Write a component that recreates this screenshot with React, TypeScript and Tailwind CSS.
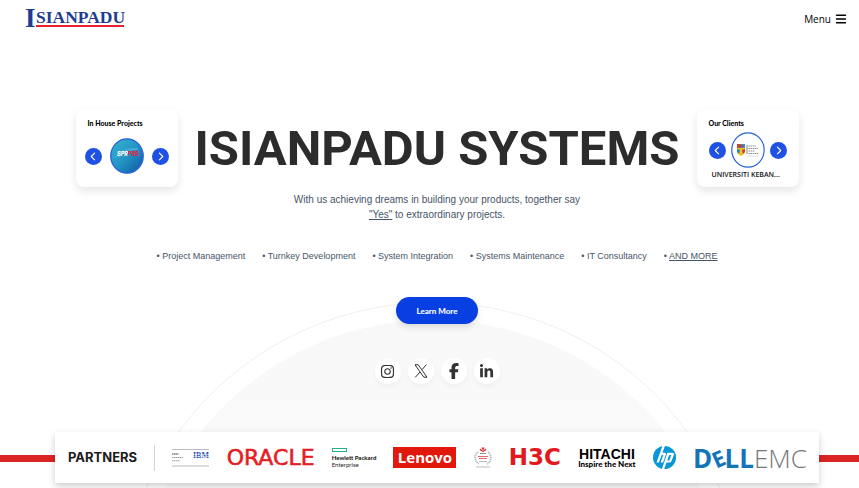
import React from "react";
import { FaFacebookF, FaInstagram, FaLinkedinIn, FaBars, FaChevronLeft, FaChevronRight } from "react-icons/fa6";

const services = [
  "Project Management",
  "Turnkey Development",
  "System Integration",
  "Systems Maintenance",
  "IT Consultancy",
];

function ArrowButton({ label, children }: { label: string; children: React.ReactNode }) {
  return (
    <button
      type="button"
      aria-label={label}
      className="flex h-[17px] w-[17px] items-center justify-center rounded-full bg-[#1f51e5] text-[9px] text-white"
    >
      {children}
    </button>
  );
}

function Card({ title, caption, children }: { title: string; caption?: string; children: React.ReactNode }) {
  return (
    <section className="flex h-[78px] w-[102px] shrink-0 flex-col rounded-lg bg-white px-[9px] pt-[8px] shadow-[0_4px_8px_rgba(0,0,0,0.1)]">
      <h2 className="px-[3px] font-['Lato',sans-serif] text-[7px] leading-[13px] font-black text-black">{title}</h2>
      <div className={caption ? "mt-[2px] flex items-center justify-between px-[3px]" : "mt-2 flex items-center justify-between"}>
        <ArrowButton label={"Previous " + title}>
          <FaChevronLeft />
        </ArrowButton>
        {children}
        <ArrowButton label={"Next " + title}>
          <FaChevronRight />
        </ArrowButton>
      </div>
      {caption && (
        <p className="px-[6px] font-['Open_Sans',sans-serif] text-[7px] leading-[14px] font-semibold whitespace-nowrap text-[#111]">
          {caption}
        </p>
      )}
    </section>
  );
}

function ProjectLogo() {
  return (
    <svg viewBox="0 0 34 36" className="h-9 w-[34px]" role="img">
      <defs>
        <linearGradient id="sea" x1="0" y1="0" x2="1" y2="1">
          <stop offset="0" stopColor="#35b5cf" />
          <stop offset="0.5" stopColor="#2494c6" />
          <stop offset="1" stopColor="#0d549f" />
        </linearGradient>
      </defs>
      <ellipse cx="17" cy="18" rx="16.2" ry="17.2" fill="url(#sea)" stroke="#2860dd" strokeWidth="1.3" />
      <path d="M5 20C10 12 19 10 28 11C19 12 12 14 8 20" fill="none" stroke="#6cc2df" strokeWidth="0.6" />
      <text x="7" y="18" fontFamily="Inter, sans-serif" fontSize="5.5" fontWeight="800" fontStyle="italic" fill="#fff">
        SPR<tspan fill="#e0263b">PRS</tspan>
      </text>
    </svg>
  );
}

function ClientLogo() {
  return (
    <svg viewBox="0 0 34 36" className="h-9 w-[34px]" role="img">
      <ellipse cx="17" cy="18" rx="16.2" ry="17.2" fill="#fff" stroke="#2860dd" strokeWidth="1.2" />
      <path d="M6 12H14V19Q14 22 10 24Q6 22 6 19Z" fill="#e8c31a" />
      <path d="M6 12H10V16H6Z" fill="#d94437" />
      <path d="M10 12H14V16H10Z" fill="#3f8ec6" />
      <path d="M6 17L9 18L8 22L6 20Z" fill="#2987c8" />
      <path d="M14 17L11 18L12 22L14 20Z" fill="#d93838" />
      <path d="M7 14H13" stroke="#8c3948" strokeWidth="0.8" />
      <path d="M16 13V22" stroke="#666" strokeWidth="0.8" />
      <path d="M17.5 14H25M17.5 16.5H27M17.5 19H24M17.5 21.5H28" stroke="#888" strokeWidth="0.9" strokeDasharray="1.6 0.5" />
      <path d="M16 24H28" stroke="#bbb" strokeWidth="0.5" />
    </svg>
  );
}

function XLogo() {
  return (
    <svg viewBox="0 0 14 14" className="h-[14px] w-[14px]" fill="none" stroke="#333" strokeWidth="1">
      <path d="M1 0.8H4.2L13 13.2H9.8Z" />
      <path d="M12.4 0.6L7.9 5.8M6 8L1.2 13.4" />
    </svg>
  );
}

function SocialLink({ label, children }: { label: string; children: React.ReactNode }) {
  return (
    <a
      href="#"
      aria-label={label}
      className="flex h-[26px] w-[26px] items-center justify-center rounded-full bg-white text-[15px] text-[#333] shadow-[0_3px_6px_rgba(0,0,0,0.04)]"
    >
      {children}
    </a>
  );
}

function Partners() {
  return (
    <section className="relative mt-auto mb-[5px]">
      <div className="absolute inset-x-0 top-[23px] h-[7px] bg-[#dc2424]" />
      <div className="relative mr-[40px] ml-[55px] flex h-[51px] items-center justify-between bg-white pr-[12px] pl-[13px] shadow-[0_3px_7px_rgba(0,0,0,0.2)]">
        <h2 className="font-['Inter',sans-serif] text-[13px] font-bold text-[#1b1b1b]">PARTNERS</h2>
        <div className="h-[26px] w-px bg-[#d2d2d2]" />
        <svg viewBox="0 0 37 18" className="h-[18px] w-[37px]" role="img">
          <path d="M0 0.5H37M0 17H37" stroke="#aaa" strokeWidth="0.8" />
          <path d="M0 5H6.5" stroke="#444" strokeWidth="1.2" strokeDasharray="1.5 0.4" />
          <path d="M0 8.5H11M0 11.8H8" stroke="#999" strokeWidth="1" strokeDasharray="1.4 0.5" />
          <text x="21" y="9" fontFamily="Liberation Serif, serif" fontSize="8" fontWeight="700" fill="#2d4fae">IBM</text>
          <path d="M20 5.5H37M20 7.5H37" stroke="#fff" strokeWidth="0.4" />
        </svg>
        <span className="font-['DejaVu_Sans',sans-serif] text-[22px] leading-none text-[#e51d24] [-webkit-text-stroke:0.6px_#e51d24]">ORACLE</span>
        <div className="font-['Lato',sans-serif] text-[6px] leading-[7px] text-[#222]">
          <div className="mb-[2px] h-[4px] w-[15px] border border-[#25b28b]" />
          <div className="font-black">Hewlett Packard</div>
          <div>Enterprise</div>
        </div>
        <div className="flex h-[21px] w-[63px] items-center justify-center bg-[#e2180c] font-['Open_Sans',sans-serif] text-[15px] leading-none font-bold text-white">Lenovo</div>
        <svg viewBox="0 0 18 21" className="h-[21px] w-[18px]" role="img">
          <path d="M4 5C0 8 0 14 5 17M14 5C18 8 18 14 13 17" fill="none" stroke="#bbb" strokeWidth="1.8" strokeDasharray="1.3 0.6" />
          <path d="M9 5L5.5 3L6.5 1.5L9 4L7.5 0.5H10.5L9 4L11.5 1.5L12.5 3Z" fill="#df2e33" />
          <path d="M6 6.5H12" stroke="#777" strokeWidth="0.8" />
          <path d="M4 9.5H14M5 11.5H13" stroke="#df6b6e" strokeWidth="1.1" />
          <path d="M5 14.5H13" stroke="#aaa" strokeWidth="0.8" />
          <path d="M2 20H16" stroke="#aaa" strokeWidth="0.8" />
        </svg>
        <span className="font-['DejaVu_Sans',sans-serif] text-[23px] leading-none font-bold text-[#e31920]">H3C</span>
        <div className="text-center text-black">
          <div className="font-['Liberation_Sans',sans-serif] text-[14px] leading-[12px] font-bold">HITACHI</div>
          <div className="font-['Lato',sans-serif] text-[8px] leading-[8px] font-black">Inspire the Next</div>
        </div>
        <svg viewBox="0 0 24 24" className="h-[23px] w-[23px]" role="img">
          <circle cx="12" cy="12" r="12" fill="#0896d7" />
          <path d="M9.8 0L3.7 17.3H6.2L9 9.4H10.8L8 17.3H10.5L13.4 9Q14.2 7 12 7H9.9L12.4 0ZM15 7L9.3 24H11.7L14.1 17.3H17.2Q18.8 17.3 19.4 15.7L21.8 9Q22.5 7 20.1 7ZM16.9 9.3H19.1L17.1 15H14.9Z" fill="#fff" />
        </svg>
        <div className="flex items-center font-['Open_Sans',sans-serif] text-[26px] leading-none">
          <span className="flex items-center font-bold text-[#1474b8]">
            D<span className="-rotate-[24deg] text-[22px]">E</span>LL
          </span>
          <span className="font-light text-[#777]">EMC</span>
        </div>
      </div>
    </section>
  );
}

export default function App() {
  return (
    <div className="relative flex min-h-screen flex-col overflow-hidden bg-white font-['Roboto',sans-serif]">
      <div className="absolute top-[302px] left-1/2 ml-[3px] h-[630px] w-[630px] -translate-x-1/2 rounded-full border border-[#f0f0f0] p-[17px]">
        <div className="h-full w-full rounded-full bg-linear-to-b from-[#f8f8f8] to-white" />
      </div>

      <header className="relative flex items-start justify-between pt-[8px] pr-3 pl-[25px]">
        <a href="#" aria-label="Isianpadu home">
          <svg viewBox="0 0 106 26" className="h-[26px] w-[106px] overflow-visible">
            <g fontFamily="Liberation Serif, serif" fontWeight="700" fill="#1e3c92">
              <text x="0" y="19" fontSize="27">I</text>
              <text x="11" y="15" fontSize="17.5">SIANPADU</text>
            </g>
            <path d="M11 18H99" stroke="#e8232d" strokeWidth="2" />
          </svg>
        </a>
        <button type="button" className="flex items-center gap-1 font-['Open_Sans',sans-serif] text-[10px] leading-[22px] text-black">
          Menu <FaBars className="text-[12px]" />
        </button>
      </header>

      <main className="relative flex flex-col items-center pl-[15px]">
        <div className="mt-[75px] flex w-full items-start justify-center gap-[17px]">
          <Card title="In House Projects">
            <ProjectLogo />
          </Card>
          <h1 className="w-[485px] pt-[8px] text-center text-[49px] leading-[63px] font-bold whitespace-nowrap text-[#2c2c2c]">
            ISIANPADU SYSTEMS
          </h1>
          <Card title="Our Clients" caption="UNIVERSITI KEBAN...">
            <ClientLogo />
          </Card>
        </div>
        <p className="mt-[5px] w-[310px] text-center font-['Liberation_Sans',sans-serif] text-[10px] leading-[15px] text-[#475569]">
          With us achieving dreams in building your products, together say <br />
          <a href="#" className="underline">"Yes"</a> to extraordinary projects.
        </p>
        <ul className="mt-[26px] flex gap-[17px] font-['Liberation_Sans',sans-serif] text-[9px] leading-[16px] whitespace-nowrap text-[#475569]">
          {services.map((name) => (
            <li key={name}>• {name}</li>
          ))}
          <li>
            • <a href="#" className="underline">AND MORE</a>
          </li>
        </ul>
        <button
          type="button"
          className="mt-[33px] h-[27px] w-[82px] rounded-full bg-[#083fe2] font-['Lato',sans-serif] text-[8px] font-black text-white shadow-[0_3px_6px_rgba(0,0,0,0.12)]"
        >
          Learn More
        </button>
        <nav aria-label="Social media" className="mt-[34px] flex gap-[7px]">
          <SocialLink label="Instagram"><FaInstagram /></SocialLink>
          <SocialLink label="X"><XLogo /></SocialLink>
          <SocialLink label="Facebook"><FaFacebookF className="text-[16px]" /></SocialLink>
          <SocialLink label="LinkedIn"><FaLinkedinIn /></SocialLink>
        </nav>
      </main>

      <Partners />
    </div>
  );
}
